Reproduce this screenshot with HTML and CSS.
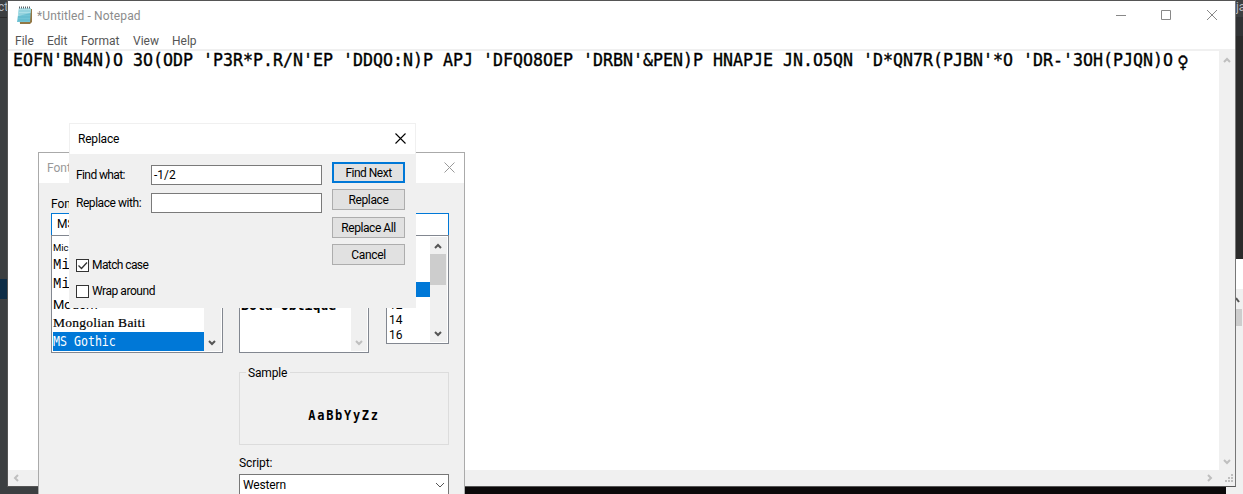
FILE: index.html
```html
<!DOCTYPE html>
<html lang="en">
<head>
<meta charset="utf-8">
<title>Notepad</title>
<link rel="stylesheet" href="styles.css">
</head>
<body>
<div class="desktop">
  <div class="backdrop">
    <div class="bd-left"><span class="bd-text">ct</span><i class="bd-line"></i><i class="bd-blue"></i></div>
    <div class="bd-mid"></div>
    <div class="bd-right"><span class="bd-text">ja</span><i class="bd-dark"></i><i class="bd-white"></i>
      <div class="bd-scroll"><svg width="8" height="8" viewBox="0 0 8 8"><path d="M0 2l3 4" stroke="#555" stroke-width="2"/></svg><i class="bd-thumb"></i></div>
    </div>
  </div>

  <section class="notepad">
    <header class="np-title">
      <svg class="np-icon" width="17" height="18" viewBox="0 0 17 18">
        <path d="M3 3h13v13l-2 2H4z" fill="#927744"/>
        <path d="M3 2h12l-1 14H1z" fill="#72c4d5"/>
        <path d="M3 2h12l-.5 5L2 10z" fill="#acdfe7"/>
        <path d="M3 5h11M3 8h11M2 11h12M2 14h12" stroke="#4eafc3" stroke-width=".5"/>
        <path d="M3 1.5h12" stroke="#59656a" stroke-width="2" stroke-dasharray="1 1"/>
      </svg>
      <span class="np-name">*Untitled - Notepad</span>
      <svg class="np-controls" width="102" height="12" viewBox="0 0 102 12" fill="none" stroke="#888">
        <path d="M0 5.5h10M45.500 .5h9v9h-9zM91 0l10 10M101 0L91 10"/>
      </svg>
    </header>
    <nav class="np-menu"><span class="m1">File</span><span class="m2">Edit</span><span class="m3">Format</span><span class="m4">View</span><span class="m5">Help</span></nav>
    <div class="np-body">
      <div class="np-text"><span class="np-line">EOFN'BN4N)O 3O(ODP 'P3R*P.R/N'EP 'DDQO:N)P APJ 'DFQO8OEP 'DRBN'&amp;PEN)P HNAPJE JN.O5QN 'D*QN7R(PJBN'*O 'DR-'3OH(PJQN)O<b class="venus">♀</b></span></div>
      <div class="np-vscroll">
        <svg width="8" height="6" viewBox="0 0 8 6"><path d="M1 5l3-3 3 3" class="chev"/></svg>
        <svg width="8" height="6" viewBox="0 0 8 6"><path d="M1 1l3 3 3-3" class="chev"/></svg>
      </div>
    </div>
    <footer class="np-hscroll">
      <svg width="6" height="8" viewBox="0 0 6 8"><path d="M5 1L2 4l3 3" class="chev"/></svg>
      <svg class="h-right" width="6" height="8" viewBox="0 0 6 8"><path d="M1 1l3 3-3 3" class="chev"/></svg>
      <svg width="8" height="8" viewBox="0 0 8 8" fill="#bfbfbf"><path d="M6 0h2v2H6zM3 3h2v2H3zM6 3h2v2H6zM0 6h2v2H0zM3 6h2v2H3zM6 6h2v2H6z"/></svg>
    </footer>
  </section>

  <section class="font-dialog">
    <header class="fd-title"><span>Font</span><svg width="11" height="11" viewBox="0 0 11 11"><path d="M.5.5l10 10M10.500.5l-10 10" stroke="#999"/></svg></header>
    <div class="fd-cols">
      <div class="fd-col c-font">
        <label>Font:</label>
        <div class="fd-input">MS</div>
        <div class="fd-list">
          <div class="fd-items">
            <span class="i-mic">Mic</span><span class="i-min">Min</span><span class="i-min">Min</span><span class="i-mod">Modern</span><span class="i-mon">Mongolian Baiti</span><span class="i-got"><b class="tall">MS Gothic</b></span>
          </div>
          <div class="fd-bar"><svg width="8" height="6" viewBox="0 0 8 6"><path d="M1 1l3 3 3-3" class="chev dark"/></svg></div>
        </div>
      </div>
      <div class="fd-col c-style">
        <div class="fd-list">
          <div class="fd-items"><span class="i-bold">Bold Oblique</span></div>
          <div class="fd-bar"><svg width="8" height="6" viewBox="0 0 8 6"><path d="M1 1l3 3 3-3" class="chev"/></svg></div>
        </div>
      </div>
      <div class="fd-col c-size">
        <div class="fd-input"></div>
        <div class="fd-list">
          <div class="fd-items"><i class="picked"></i><span>12</span><span>14</span><span>16</span></div>
          <div class="fd-bar"><svg width="8" height="6" viewBox="0 0 8 6"><path d="M1 5l3-3 3 3" class="chev dark"/></svg><i class="thumb"></i><svg class="down" width="8" height="6" viewBox="0 0 8 6"><path d="M1 1l3 3 3-3" class="chev dark"/></svg></div>
        </div>
      </div>
    </div>
    <div class="fd-lower">
      <fieldset class="sample"><legend>Sample</legend><span>AaBbYyZz</span></fieldset>
      <div class="script-label">Script:</div>
      <div class="script-select"><span>Western</span><svg width="10" height="6" viewBox="0 0 10 6"><path d="M1 1l4 4 4-4" fill="none" stroke="#555"/></svg></div>
    </div>
  </section>

  <section class="replace-dialog">
    <header class="rd-title"><span>Replace</span><svg width="11" height="11" viewBox="0 0 11 11"><path d="M.5.5l10 10M10.500.5l-10 10" stroke="#000" stroke-width="1.100"/></svg></header>
    <div class="rd-body">
      <div class="rd-form">
        <div class="rd-row"><label class="l1">Find what:</label><div class="rd-input">-1/2</div></div>
        <div class="rd-row"><label class="l2">Replace with:</label><div class="rd-input"></div></div>
        <div class="rd-check first"><svg width="13" height="13" viewBox="0 0 13 13"><rect x=".5" y=".5" width="12" height="12" fill="#fff" stroke="#333"/><path d="M2.500 6.500l3 3 5.500-6" fill="none" stroke="#333" stroke-width="1.300"/></svg><span class="k1">Match case</span></div>
        <div class="rd-check"><svg width="13" height="13" viewBox="0 0 13 13"><rect x=".5" y=".5" width="12" height="12" fill="#fff" stroke="#333"/></svg><span class="k2">Wrap around</span></div>
      </div>
      <div class="rd-buttons"><div class="btn primary">Find Next</div><div class="btn">Replace</div><div class="btn all">Replace All</div><div class="btn">Cancel</div></div>
    </div>
  </section>
</div>
</body>
</html>
```
FILE: styles.css
```css
* { box-sizing: border-box; }
body { margin: 0; overflow: hidden; font: 12px/15px Roboto, sans-serif; color: #000; }
svg { display: block; flex: none; }
span, label { white-space: pre; }
.desktop { position: relative; width: 1243px; height: 494px; overflow: hidden; }
.chev { fill: none; stroke: #bfbfbf; stroke-width: 2; }
.chev.dark { stroke: #555; }

.backdrop { display: flex; height: 494px; background: #3c3f41; }
.bd-left { width: 39px; display: flex; flex-direction: column; overflow: hidden; }
.bd-text { height: 17px; line-height: 15px; color: #b5bac0; font-size: 12px; flex: none; }
.bd-left .bd-text { width: 8px; margin-left: -2px; }
.bd-line { height: 1px; background: #2b2b2b; }
.bd-blue { margin-top: 261px; height: 20px; background: #0d2d47; }
.bd-mid { width: 1187px; background: linear-gradient(#494b4d 0 10px, #0b090a 10px); }
.bd-right { width: 17px; padding-left: 10px; display: flex; flex-direction: column; overflow: hidden; background: #f0f0f0; }
.bd-right .bd-text { background: #3c3f41; }
.bd-dark { height: 242px; background: linear-gradient(#313335 0 19px, #2b2b2b 19px); }
.bd-white { height: 30px; background: #fff; }
.bd-scroll { padding-top: 7px; }
.bd-thumb { display: block; margin-top: 5px; width: 6px; height: 17px; background: #cdcdcd; }

.notepad { position: absolute; left: 7px; top: 0; width: 1229px; height: 487px; display: flex; flex-direction: column; border: 1px solid #555; border-right-color: #777; background: #fff; }
.np-title { height: 30px; display: flex; align-items: flex-start; padding: 5px 17px 0 8px; color: #8c8c8c; }
.np-name { margin: 3px 0 0 4px; letter-spacing: .12px; }
.np-controls { margin: 4px 0 0 auto; }
.np-menu { height: 20px; display: flex; padding: 3px 0 0 7px; color: #555; border-bottom: 2px solid #f0f0f0; }
.m1 { width: 32px; } .m2 { width: 34px; } .m3 { width: 52px; } .m4 { width: 39px; }
.np-body { flex: 1; display: flex; }
.np-text { flex: 1; padding: 1px 0 0 5px; }
.np-line { display: block; height: 18px; font: 16.610px/18px "DejaVu Sans Mono", monospace; -webkit-text-stroke: .35px #000; transform: scaleY(1.080); transform-origin: 0 50%; }
.venus { display: inline-block; width: 20px; height: 18px; text-align: center; font-size: 19px; font-weight: 400; vertical-align: top; }
.np-vscroll { width: 16px; background: #f0f0f0; display: flex; flex-direction: column; align-items: center; justify-content: space-between; padding: 6px 0 5px; }
.np-hscroll { height: 16px; background: #f0f0f0; display: flex; align-items: center; padding: 0 2px 0 5px; }
.h-right { margin: 0 12px 0 auto; }

.font-dialog { position: absolute; left: 38px; top: 152px; width: 427px; height: 350px; background: #f0f0f0; border: 1px solid #aaa; }
.fd-title { height: 30px; background: #fff; color: #999; display: flex; align-items: center; justify-content: space-between; padding: 0 9px 2px 8px; }
.fd-title span { padding-top: 2px; }
.fd-cols { display: flex; height: 170px; padding: 13px 0 0 12px; }
.fd-col { display: flex; flex-direction: column; margin-right: 16px; }
.fd-col label { height: 17px; padding-top: 1px; }
.c-font { width: 172px; }
.c-style { width: 130px; padding-top: 39px; margin-right: 17px; }
.c-size { width: 63px; padding-top: 17px; margin: 0; }
.fd-input { height: 23px; border: 1px solid #0078d7; background: #fff; padding: 3px 5px; }
.fd-list { display: flex; height: 118px; border: 1px solid #828790; background: #fff; padding: 1px; margin-top: -1px; }
.c-style .fd-list { margin: 0; }
.c-size .fd-list { height: 109px; }
.fd-items { flex: 1; display: flex; flex-direction: column; min-width: 0; }
.c-font .fd-items span { height: 19px; line-height: 19px; flex: none; }
.c-font .fd-items .i-mic { font-size: 9.500px; line-height: 21px; }
.i-min { font: 14px "Liberation Mono", monospace; }
.c-font .fd-items .i-mod { font-size: 13px; line-height: 21px; }
.i-mon { font: 13.500px "Liberation Serif", serif; letter-spacing: .25px; -webkit-text-stroke: .2px #000; }
.c-font .fd-items .i-got { background: #0078d7; color: #fff; }
.tall { display: block; font: 11.600px/19px "DejaVu Sans Mono", monospace; transform: scaleY(1.250); }
.fd-bar { width: 16px; flex: none; background: #f0f0f0; display: flex; flex-direction: column; justify-content: flex-end; align-items: center; padding-bottom: 5px; }
.c-font .fd-bar { width: 17px; padding-right: 1px; }
.i-bold { font: bold 13.200px/16px "DejaVu Sans Mono", monospace; margin-top: 61px; }
.c-size .picked { height: 15px; margin-top: 45px; background: #0078d7; }
.c-size .fd-items span { height: 15px; line-height: 17px; padding-left: 1px; }
.c-size .fd-bar { width: 17px; padding: 6px 1px 5px 0; justify-content: flex-start; }
.thumb { width: 16px; height: 31px; margin-top: 5px; background: #cdcdcd; }
.down { margin-top: auto; }
.fd-lower { margin-left: 200px; width: 210px; padding-top: 12px; }
.sample { margin: 0; padding: 0; height: 80px; border: 1px solid #dcdcdc; }
.sample legend { margin-left: 6px; padding: 1px 3px 0 2px; height: 15px; letter-spacing: -.15px; }
.sample > span { display: block; margin-top: 26px; text-align: center; font: bold 12px/16px "DejaVu Sans Mono", monospace; letter-spacing: 1.700px; transform: translateY(1px) scaleY(1.150); }
.script-label { margin-top: 11px; height: 18px; letter-spacing: -.1px; }
.script-select { height: 24px; border: 1px solid #777; background: #fff; display: flex; align-items: center; justify-content: space-between; padding: 0 3px 2px; }
.script-select span { letter-spacing: -.15px; }

.replace-dialog { position: absolute; left: 69px; top: 123px; width: 347px; height: 185px; background: #f0f0f0; border: 1px solid #f0f0f0; }
.rd-title { height: 30px; background: #fff; display: flex; align-items: center; justify-content: space-between; padding: 0 9px 2px 8px; letter-spacing: -.2px; }
.rd-title span { padding-top: 2px; }
.rd-body { display: flex; padding: 8px 10px 0 6px; }
.rd-form { width: 246px; margin-right: 10px; padding-top: 3px; }
.rd-row { display: flex; height: 20px; margin-bottom: 8px; align-items: center; justify-content: space-between; }
.rd-row label { padding-top: 1px; }
.l1 { letter-spacing: -.6px; }
.l2 { letter-spacing: -.45px; }
.rd-input { width: 171px; height: 20px; border: 1px solid #7a7a7a; background: #fff; padding: 2px; }
.rd-check { display: flex; height: 13px; margin-bottom: 13px; align-items: center; gap: 3px; }
.rd-check.first { margin-top: 45px; }
.k1 { letter-spacing: -.6px; }
.k2 { letter-spacing: -.45px; }
.rd-check svg { margin-top: 1px; }
.rd-check span { padding-top: 1px; }
.rd-buttons { width: 73px; display: flex; flex-direction: column; gap: 6.400px; }
.btn { height: 21px; border: 1px solid #adadad; background: #e1e1e1; text-align: center; line-height: 21px; letter-spacing: -.35px; }
.btn.all { letter-spacing: -.45px; }
.btn.primary { border: 2px solid #0078d7; line-height: 19px; letter-spacing: -.5px; }
```
